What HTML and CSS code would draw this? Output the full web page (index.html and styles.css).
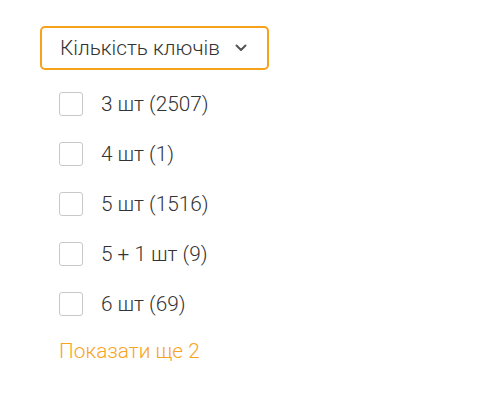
FILE: index.html
```html
<!DOCTYPE html>
<html lang="uk">
<head>
<meta charset="utf-8">
<link rel="stylesheet" href="styles.css">
</head>
<body>
<div class="filter">
  <button class="toggle" type="button">
    <span class="toggle-label">Кількість ключів</span>
    <svg class="chevron" width="12" height="8" viewBox="0 0 12 8"><path d="M1.5 1.5 L6 6 L10.5 1.5" fill="none" stroke="#555" stroke-width="2" stroke-linecap="round" stroke-linejoin="round"/></svg>
  </button>
  <ul class="options">
    <li class="option"><span class="box"></span><span class="label">3 шт (2507)</span></li>
    <li class="option"><span class="box"></span><span class="label">4 шт (1)</span></li>
    <li class="option"><span class="box"></span><span class="label">5 шт (1516)</span></li>
    <li class="option"><span class="box"></span><span class="label">5 + 1 шт (9)</span></li>
    <li class="option"><span class="box"></span><span class="label">6 шт (69)</span></li>
  </ul>
  <a class="more" href="#">Показати ще 2</a>
</div>
</body>
</html>
```
FILE: styles.css
```css
html, body {
  margin: 0;
  padding: 0;
  background: #fff;
}
body {
  font-family: Roboto, "Liberation Sans", sans-serif;
  font-weight: 300;
  color: #333;
}
.filter {
  padding: 26px 0 0 40px;
}
.toggle {
  display: flex;
  align-items: center;
  box-sizing: border-box;
  width: 229px;
  height: 44px;
  padding: 0 0 0 18px;
  border: 2px solid #f7a21b;
  border-radius: 5px;
  background: #fff;
  font-family: inherit;
  font-weight: 300;
  font-size: 20.8px;
  color: #333;
  cursor: pointer;
}
.toggle-label {
  flex: 1;
  text-align: left;
}
.chevron {
  margin-right: 20px;
}
.options {
  list-style: none;
  margin: 9px 0 0 0;
  padding: 0 0 0 19px;
}
.option {
  display: flex;
  align-items: center;
  height: 50px;
}
.box {
  box-sizing: border-box;
  width: 24px;
  height: 24px;
  border: 1px solid #c9c9c9;
  border-radius: 3px;
  margin-right: 18px;
}
.label {
  font-size: 20.8px;
  color: #333;
}
.more {
  display: block;
  margin: 10px 0 0 19px;
  font-size: 20.8px;
  font-weight: 300;
  color: #f8a41e;
  text-decoration: none;
}
```
